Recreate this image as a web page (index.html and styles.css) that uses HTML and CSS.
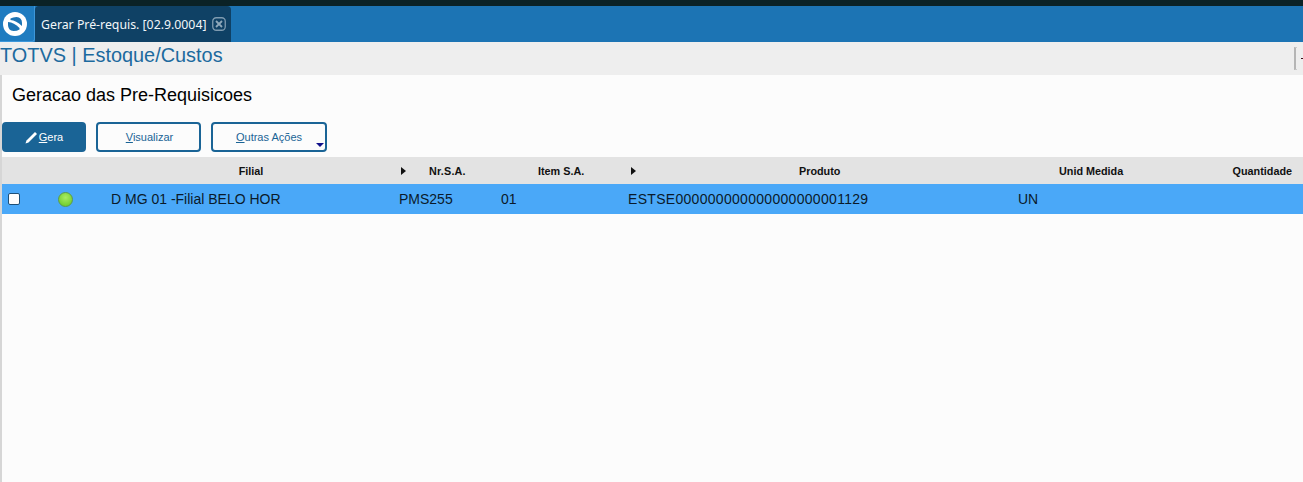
FILE: index.html
```html
<!DOCTYPE html>
<html lang="pt-BR">
<head>
<meta charset="utf-8">
<title>Gerar Pré-requis.</title>
<link rel="stylesheet" href="styles.css">
</head>
<body>
<div class="topstrip"></div>
<nav class="tabbar">
  <div class="logo">
    <svg width="30" height="30" viewBox="0 0 30 30">
      <circle cx="15" cy="15" r="12" fill="#fff"/>
      <path d="M10.5 9.6 Q13 8 16.5 8 Q22 8.5 22 14 L22 17 Q16 11.5 10.5 11 Z" fill="#1c74b4"/>
      <path d="M8 13 Q14 13.5 19.5 19 L19.5 20.5 Q17 22 13.5 22 Q8 21.5 8 16 Z" fill="#1c74b4"/>
    </svg>
  </div>
  <div class="tab">
    <span class="tab-label">Gerar Pré-requis. [02.9.0004]</span>
    <svg class="tab-close" width="14" height="14" viewBox="0 0 14 14">
      <rect x="0.75" y="0.75" width="12.5" height="12.5" rx="3.5" fill="none" stroke="#7f9bb0" stroke-width="1.3"/>
      <path d="M4 4 L10 10 M10 4 L4 10" stroke="#8fa8ba" stroke-width="1.8"/>
    </svg>
  </div>
</nav>
<header class="modulebar">
  <span class="module-title">TOTVS | Estoque/Custos</span>
  <div class="module-tools"><span class="bracket"></span><span class="tick"></span></div>
</header>
<main class="content">
  <h1 class="page-title">Geracao das Pre-Requisicoes</h1>
  <div class="actions">
    <button class="btn btn-primary">
      <svg width="13" height="13" viewBox="0 0 13 13"><path d="M0.5 12.5 L1.5 9.5 L10 1 L12 3 L3.5 11.5 Z" fill="#fff"/></svg>
      <span><u>G</u>era</span>
    </button>
    <button class="btn btn-view"><span><u>V</u>isualizar</span></button>
    <button class="btn btn-more"><span><u>O</u>utras Ações</span><i class="caret"></i></button>
  </div>
  <div class="grid head">
    <div></div>
    <div></div>
    <div class="h-filial">Filial</div>
    <div class="h-nr"><i class="arrow"></i><span>Nr.S.A.</span></div>
    <div class="h-item">Item S.A.</div>
    <div class="h-prod"><i class="arrow"></i><span>Produto</span></div>
    <div class="h-unid">Unid Medida</div>
    <div class="h-qtd">Quantidade</div>
  </div>
  <div class="grid row">
    <div class="c-check"><span class="check"></span></div>
    <div class="c-led"><span class="led"></span></div>
    <div class="c-filial">D MG 01 -Filial BELO HOR</div>
    <div class="c-nr">PMS255</div>
    <div class="c-item">01</div>
    <div class="c-prod">ESTSE000000000000000000001129</div>
    <div class="c-unid">UN</div>
    <div></div>
  </div>
</main>
</body>
</html>
```
FILE: styles.css
```css
* { box-sizing: border-box; }
html, body { margin: 0; height: 100%; overflow: hidden; }
body { display: flex; flex-direction: column; background: #fcfcfc; font-family: "Liberation Sans", Arial, sans-serif; color: #000; }

.topstrip { height: 6px; background: #0b2226; flex: none; }

.tabbar { height: 36px; flex: none; background: #1c74b4; display: flex; }
.logo { width: 35px; height: 36px; background: #1f7cc0; border-right: 1px solid #3d97da; border-bottom: 1px solid #3d97da; border-radius: 0 0 3px 0; padding: 3px 0 0 0; }
.logo svg { display: block; }
.tab { width: 196px; background: #0f4165; border-radius: 4px 4px 0 0; display: flex; align-items: center; padding: 0 0 0 6px; }
.tab-label { font: 12.3px "Noto Sans", sans-serif; color: #f2f6f9; width: 171px; white-space: nowrap; }
.tab-close { display: block; }

.modulebar { height: 33px; flex: none; background: #eeeeee; display: flex; align-items: flex-start; justify-content: space-between; }
.module-title { font-size: 19.9px; line-height: 27px; color: #1c6a9e; white-space: nowrap; }
.module-tools { display: flex; align-items: center; margin-top: 5px; }
.bracket { width: 3px; height: 23px; border-left: 2px solid #b5b5b5; border-top: 1px solid #ccc; border-bottom: 1px solid #ccc; }
.tick { width: 2px; height: 1px; background: #40101c; margin-left: 4px; }

.content { flex: 1; border-left: 2px solid #d6d6d6; background: #fcfcfc; }
.page-title { margin: 0; padding: 10px 0 0 10px; height: 47px; font-size: 18px; font-weight: 400; line-height: 20px; color: #000; }

.actions { display: flex; gap: 10px; height: 30px; }
.btn { height: 30px; border: 2px solid #1a6496; border-radius: 4px; background: #fcfcfc; color: #1a6496; font: 11px "Liberation Sans", Arial, sans-serif; padding: 0; display: flex; align-items: center; justify-content: center; position: relative; }
.btn-primary { width: 84px; background: #1a6496; color: #fff; gap: 1px; }
.btn-view { width: 105px; padding-left: 2px; }
.btn-more { width: 116px; }
.caret { position: absolute; right: 1px; bottom: 3px; border-left: 4px solid transparent; border-right: 4px solid transparent; border-top: 4px solid #10108a; }

.grid { display: grid; grid-template-columns: 48px 51px 288px 102px 127px 390px 142px 1fr; align-items: center; }
.head { margin-top: 5px; height: 27px; background: #e3e3e3; font-size: 10.8px; font-weight: 700; color: #111; }
.row { height: 30px; background: #4aa8f8; font-size: 14px; color: #0a1a2a; }

.arrow { display: block; border-top: 4px solid transparent; border-bottom: 4px solid transparent; border-left: 5px solid #111; }
.h-filial { text-align: center; padding-left: 12px; }
.h-nr { display: flex; align-items: center; padding-left: 12px; gap: 23px; }
.h-nr span { letter-spacing: 0.2px; }
.h-item { padding-left: 47px; }
.h-prod { display: flex; align-items: center; padding-left: 13px; }
.h-prod span { margin-left: 163px; }
.h-unid { padding-left: 51px; }
.h-qtd { text-align: right; padding-right: 11px; }

.c-check { padding-left: 6px; display: flex; }
.check { width: 12px; height: 12px; background: #fdfdfd; border: 1.5px solid #1d4f78; border-radius: 2px; }
.c-led { padding-left: 8px; display: flex; }
.led { width: 15px; height: 15px; border-radius: 50%; border: 1px solid #5c9a4a; background: radial-gradient(circle at 50% 35%, #a8ec62, #74cf30 75%); }
.c-filial { padding-left: 10px; white-space: nowrap; }
.c-nr { padding-left: 10px; }
.c-item { padding-left: 10px; }
.c-prod { padding-left: 10px; white-space: nowrap; letter-spacing: 0.3px; }
.c-unid { padding-left: 10px; }
```
